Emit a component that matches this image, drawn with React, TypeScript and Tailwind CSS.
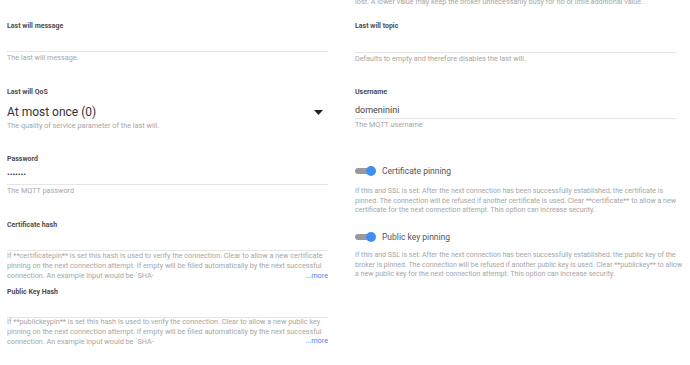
import React from "react";

const font = { fontFamily: "Roboto, 'Noto Sans', sans-serif" };

function Label({ children, className = "" }: { children: React.ReactNode; className?: string }) {
  return <div className={`text-[7px] leading-[9px] font-bold text-[#4d4d4d] ${className}`}>{children}</div>;
}

function Helper({ children, className = "" }: { children: React.ReactNode; className?: string }) {
  return <div className={`text-[7.25px] leading-[9px] text-[#a6a6a6] whitespace-nowrap ${className}`}>{children}</div>;
}

function Toggle() {
  return (
    <div className="relative w-[21px] h-[10px] flex items-center">
      <div className="w-[20px] h-[6px] rounded-full bg-[#9a9a9a]" />
      <div className="absolute right-0 top-0 w-[10px] h-[10px] rounded-full bg-[#3f8ff3]" />
    </div>
  );
}

export default function App() {
  return (
    <div className="w-[690px] h-[365px] bg-white overflow-hidden flex" style={font}>
      {/* Left column */}
      <div className="ml-[7px] w-[321px] flex flex-col">
        <Label className="mt-[22px]">Last will message</Label>
        <div className="h-[21px] border-b border-[#e6e6e6]" />
        <Helper className="mt-[1px]">The last will message.</Helper>

        <Label className="mt-[26px]">Last will QoS</Label>
        <div className="mt-[8px] h-[14px] flex items-center justify-between">
          <span className="text-[12px] leading-[14px] text-[#333]">At most once (0)</span>
          <svg width="9" height="5" viewBox="0 0 9 5" className="mr-[5px]">
            <path d="M0 0 H9 L4.5 5 Z" fill="#222" />
          </svg>
        </div>
        <Helper className="mt-[1.5px]">The quality of service parameter of the last will.</Helper>

        <Label className="mt-[25px]">Password</Label>
        <div className="h-[21px] border-b border-[#e6e6e6] flex items-center pt-[2px]">
          <span className="text-[8px] leading-[8px] text-[#333]">•••••••</span>
        </div>
        <Helper className="mt-[1.5px]">The MQTT password</Helper>

        <Label className="mt-[25.5px]">Certificate hash</Label>
        <div className="h-[21px] border-b border-[#e6e6e6]" />
        <div className="text-[7.25px] leading-[10px] text-[#a6a6a6] whitespace-nowrap">
          If **certificatepin** is set this hash is used to verify the connection. Clear to allow a new certificate
          <br />
          pinning on the next connection attempt. If empty will be filled automatically by the next successful
          <br />
          connection. An example input would be `SHA-
        </div>
        <div className="-mt-[10px] text-right text-[7.25px] leading-[10px] text-[#4a86e8]">...more</div>

        <Label className="mt-[7px]">Public Key Hash</Label>
        <div className="h-[21px] border-b border-[#e6e6e6]" />
        <div className="-mt-[0.5px] text-[7.25px] leading-[9.75px] text-[#a6a6a6] whitespace-nowrap">
          If **publickeypin** is set this hash is used to verify the connection. Clear to allow a new public key
          <br />
          pinning on the next connection attempt. If empty will be filled automatically by the next successful
          <br />
          connection. An example input would be `SHA-
        </div>
        <div className="-mt-[10px] text-right text-[7.25px] leading-[10px] text-[#4a86e8]">...more</div>
      </div>

      {/* Right column */}
      <div className="ml-[27px] w-[330px] flex flex-col">
        <div className="-mt-[3px] text-[7.25px] leading-[10px] text-[#a6a6a6] whitespace-nowrap">
          lost. A lower value may keep the broker unnecessarily busy for no or little additional value.
        </div>
        <Label className="mt-[14.5px]">Last will topic</Label>
        <div className="w-[321px] h-[22px] border-b border-[#e6e6e6]" />
        <Helper className="mt-[1px]">Defaults to empty and therefore disables the last will.</Helper>

        <Label className="mt-[25.5px]">Username</Label>
        <div className="w-[321px] h-[22px] border-b border-[#e6e6e6] flex items-end pb-[2px]">
          <span className="text-[9px] leading-[12px] text-[#444]">domeninini</span>
        </div>
        <Helper className="mt-[0.5px]">The MQTT username</Helper>

        <div className="mt-[36px] h-[12px] flex items-center gap-[6px]">
          <Toggle />
          <span className="text-[8.5px] leading-[12px] text-[#555]">Certificate pinning</span>
        </div>
        <div className="mt-[9.5px] text-[7.05px] leading-[9.5px] text-[#a6a6a6] whitespace-nowrap">
          If this and SSL is set: After the next connection has been successfully established, the certificate is
          <br />
          pinned. The connection will be refused if another certificate is used. Clear **certificate** to allow a new
          <br />
          certificate for the next connection attempt. This option can increase security.
        </div>

        <div className="mt-[16px] h-[12px] flex items-center gap-[6px]">
          <Toggle />
          <span className="text-[8.5px] leading-[12px] text-[#555]">Public key pinning</span>
        </div>
        <div className="mt-[7.5px] text-[7.05px] leading-[9.5px] text-[#a6a6a6] whitespace-nowrap">
          If this and SSL is set: After the next connection has been successfully established, the public key of the
          <br />
          broker is pinned. The connection will be refused if another public key is used. Clear **publickey** to allow
          <br />
          a new public key for the next connection attempt. This option can increase security.
        </div>
      </div>
    </div>
  );
}
